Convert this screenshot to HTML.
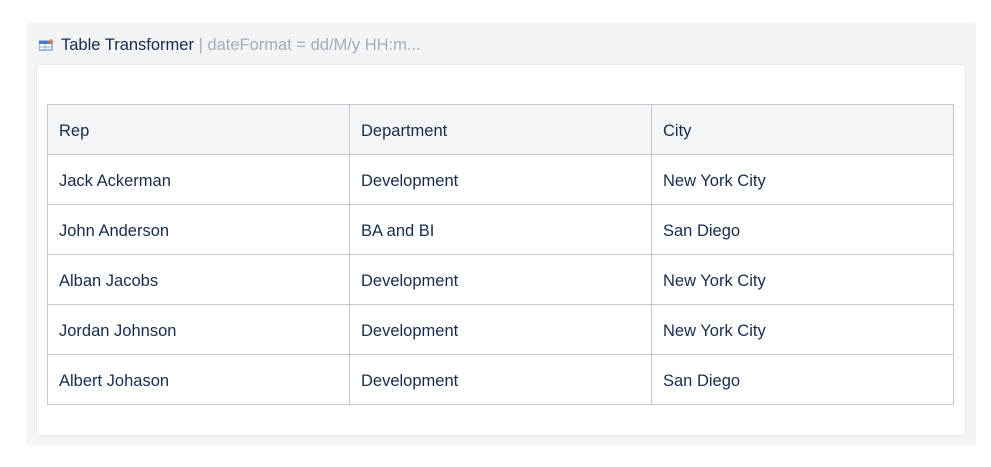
<!DOCTYPE html>
<html><head><style>
body{margin:0;background:#fff;width:991px;height:467px;overflow:hidden;font-family:"Liberation Sans",sans-serif;}
.outer{position:absolute;left:26px;top:23px;width:950px;height:423px;background:#f3f4f6;border-radius:3px;}
.title{position:absolute;left:13px;top:12px;font-size:16.5px;color:#172b4d;white-space:nowrap;line-height:20px;}
.title .g{color:#a5adba;}
.inner{position:absolute;left:10px;top:41px;width:928px;height:370px;background:#fff;border:1px solid #e8e9ec;border-radius:3px;}
table{position:absolute;left:10px;top:39px;border-collapse:collapse;width:907px;}
td{border:1px solid #c1c7d0;height:50px;padding:4px 0 0 11px;box-sizing:border-box;font-size:16.5px;color:#172b4d;width:290px;}
tr.h td{background:#f4f5f7;}
</style></head><body>
<div class="outer">
<div class="title"><svg width="16" height="12" style="vertical-align:-1px;margin-right:6px" viewBox="0 0 16 12"><rect x="0" y="2" width="13" height="9" fill="#fff" stroke="#4a7bc4"/><rect x="0" y="2" width="13" height="3" fill="#4a7bc4"/><line x1="0" y1="8" x2="13" y2="8" stroke="#9ab"/><line x1="6" y1="5" x2="6" y2="11" stroke="#9ab"/><path d="M12 0v5M9.5 2.5h5" stroke="#e07b2a" stroke-width="1.5"/></svg>Table Transformer <span class="g">| dateFormat = dd/M/y HH:m...</span></div>
<div class="inner">
<table>
<tr class="h"><td>Rep</td><td>Department</td><td>City</td></tr>
<tr><td>Jack Ackerman</td><td>Development</td><td>New York City</td></tr>
<tr><td>John Anderson</td><td>BA and BI</td><td>San Diego</td></tr>
<tr><td>Alban Jacobs</td><td>Development</td><td>New York City</td></tr>
<tr><td>Jordan Johnson</td><td>Development</td><td>New York City</td></tr>
<tr><td>Albert Johason</td><td>Development</td><td>San Diego</td></tr>
</table>
</div>
</div>
</body></html>
